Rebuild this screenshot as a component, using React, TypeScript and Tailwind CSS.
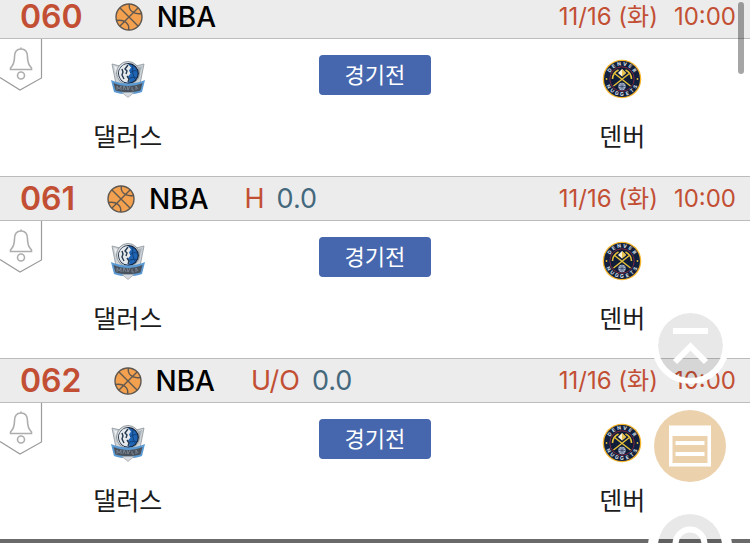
type Match = { no: string; kind?: string; line?: string };

const matches: Match[] = [
  { no: "060" },
  { no: "061", kind: "H", line: "0.0" },
  { no: "062", kind: "U/O", line: "0.0" },
];

function Basketball() {
  return (
    <svg viewBox="0 0 28 28" className="size-7 shrink-0" fill="none" stroke="#5f5750" strokeWidth="1.4" aria-hidden="true">
      <circle cx="14" cy="14" r="13" fill="#f3a14f" />
      <path d="M5 5l18 18M23 5L5 23" />
      <path d="M14.500 1c-1.500 6 4 11 12 9.500M13.500 27c1.500-6-4-11-12-9.500" />
    </svg>
  );
}

function AlarmTag() {
  return (
    <button type="button" aria-label="알림" className="absolute top-0 left-0 h-13 w-11">
      <svg viewBox="0 0 44 52" className="h-13 w-11" fill="none" stroke="#9b9b9b" aria-hidden="true">
        <path d="M41.500 0V39L20 51L0 38.500" strokeWidth="1.200" />
        <path d="M21 8.500v1.500M21 10c-4.500 0-6.500 3.500-6.500 8c0 5-.5 7.500-4 11v1.500h21V29c-3.500-3.500-4-6-4-11c0-4.500-2-8-6.500-8z" strokeWidth="1.600" stroke="#adadad" />
        <circle cx="21" cy="36.500" r="3.500" strokeWidth="1.600" stroke="#adadad" />
      </svg>
    </button>
  );
}

function MavericksLogo() {
  return (
    <svg viewBox="-2 -2 40 40" className="size-10" aria-hidden="true">
      <path d="M2 3l8 2h16l8-2-4 20-12 13L6 23z" fill="#cdd2d6" stroke="#8d969d" strokeWidth=".8" />
      <path d="M4 5l5 2-1 12z" fill="#eef0f2" />
      <path d="M32 5l-5 2 1 12z" fill="#aab2b9" />
      <circle cx="18" cy="12" r="11.500" fill="#d9dde0" stroke="#7d868d" strokeWidth=".8" />
      <circle cx="18.500" cy="12.500" r="9.800" fill="#1f65b4" stroke="#15233a" strokeWidth="1.200" />
      <path d="M18 3c-6 0-9.500 5-9 10s4 8.500 9 8.500c2.500-1 1-4 0-6l2.500-3-1.500-3 2-3z" fill="#e6eaed" />
      <path d="M18 4l-3 4 2 2-1 3M17 15l2 3-1 3M12 8l1 3-1 3 2 4" fill="none" stroke="#25394f" strokeWidth="1.400" />
      <path d="M20 12c3-3 6-3 8-1M23 4c-1 6 0 11 2 14M20 17c3-1 5-1 7 0" fill="none" stroke="#103c75" strokeWidth=".9" />
      <path d="M1 19c10 4.500 24 4.500 34 0l-3 12c-8 3-20 3-28 0z" fill="#5b9ad2" />
      <path d="M3.500 22c9 4 20 4 29 0l-2 7.500c-8 2-17 2-25 0z" fill="#4a535d" />
      <path d="M7 29v-4l2 3 2-3v4M13 29l1-4 2 4M17 25l1 4 2-4M22 26v3h2M26 29v-4l2 3" fill="none" stroke="#8591a0" strokeWidth=".8" />
      <path d="M12 31.500h12l-6 5z" fill="#d7dbdf" stroke="#9ba4aa" strokeWidth=".7" />
    </svg>
  );
}

const topLetters = [..."DENVER"];
const bottomLetters = [..."NUGGETS"];

function NuggetsLogo() {
  return (
    <svg viewBox="0 0 40 40" className="size-10" aria-hidden="true">
      <circle cx="20" cy="20" r="19.300" fill="#f5b62e" />
      <circle cx="20" cy="20" r="18" fill="#12203f" />
      <circle cx="20" cy="20" r="12.200" fill="#101d39" stroke="#7b2943" strokeWidth="1" />
      <g stroke="#e4bf39" fill="none">
        <path d="M11.500 27L28 14M28.500 27L12 14" strokeWidth="1.500" />
        <path d="M10.500 20c0-4 2-7 6-9M29.500 20c0-4-2-7-6-9" strokeWidth="1.600" />
      </g>
      <path d="M20 10l4 4-4 3.500-4-3.500z" fill="#f7f2dc" />
      <path d="M20 10l4 4-4 3.500z" fill="#e9c34c" />
      <circle cx="20" cy="27.500" r="3.700" fill="#aebbd1" />
      <path d="M16.500 27.500h7M20 24v7M17.500 25l5 5M22.500 25l-5 5" stroke="#35476b" strokeWidth=".7" />
      <g className="font-['Inter',sans-serif] text-[5px] font-bold" fill="#dde1ea" textAnchor="middle">
        {topLetters.map((c, i) => (
          <text key={i} x="20" y="6.500" transform={`rotate(${-55 + i * 22} 20 20)`}>{c}</text>
        ))}
        {bottomLetters.map((c, i) => (
          <text key={i} x="20" y="37" transform={`rotate(${60 - i * 20} 20 20)`}>{c}</text>
        ))}
      </g>
      <circle cx="4.500" cy="20" r=".9" fill="#e4bf39" />
      <circle cx="35.500" cy="20" r=".9" fill="#e4bf39" />
    </svg>
  );
}

function MatchRow({ match }: { match: Match }) {
  return (
    <article className="h-[182px]">
      <header className="flex h-[45px] items-center border-y border-[#bcbcbc] bg-[#ececec] pr-3.5 pl-5">
        <h2 className="text-[32px] leading-8 font-semibold text-[#c24f34]">{match.no}</h2>
        <div className="ml-8 flex items-center gap-3.5">
          <Basketball />
          <span className="text-[28px] leading-8 font-medium text-black">NBA</span>
        </div>
        {match.kind && (
          <div className="ml-9 flex items-center gap-3 text-[27px] leading-8">
            <span className="text-[#c24f34]">{match.kind}</span>
            <span className="text-[#44687c]">{match.line}</span>
          </div>
        )}
        <time className="ml-auto flex gap-4 text-[24px] leading-8 text-[#c24f34]">
          <span>11/16 (화)</span>
          <span>10:00</span>
        </time>
      </header>
      <div className="relative grid grid-cols-3 px-1">
        <AlarmTag />
        <div className="flex flex-col items-center gap-4.5 pt-5 text-[25px] leading-10 text-[#1c1c1c]">
          <MavericksLogo />
          <span>댈러스</span>
        </div>
        <div className="flex items-start justify-center pt-4">
          <button type="button" className="h-10 w-28 rounded bg-[#4667ae] text-[22px] leading-10 text-white">경기전</button>
        </div>
        <div className="flex flex-col items-center gap-4.5 pt-5 text-[25px] leading-10 text-[#1c1c1c]">
          <NuggetsLogo />
          <span>덴버</span>
        </div>
      </div>
    </article>
  );
}

export default function App() {
  return (
    <main className="relative h-screen overflow-hidden bg-white font-['Inter','Noto_Sans_CJK_KR',sans-serif]">
      <div className="-mt-1.5">
        {matches.map((m) => (
          <MatchRow key={m.no} match={m} />
        ))}
        <div className="-mt-px h-5 bg-[#6a6a6a]" />
      </div>
      <div className="absolute top-0.5 right-1.5 h-18 w-1.5 rounded-full bg-black/35" />
      <nav className="absolute top-[307px] right-[18px] flex w-[84px] flex-col items-center">
        <button type="button" aria-label="맨 위로" className="size-[77px] rounded-full border-[6px] border-white bg-black/9 bg-clip-padding">
          <svg viewBox="0 0 65 65" className="size-full" fill="none" stroke="#fff" strokeWidth="6" aria-hidden="true">
            <path d="M15 18h35M17 49l15.500-15.500L48 49" />
          </svg>
        </button>
        <button type="button" aria-label="목록" className="mt-[26px] size-[72px] rounded-full bg-[#ecd1ad]">
          <svg viewBox="0 0 72 72" className="size-full" fill="none" stroke="#fff" aria-hidden="true">
            <path d="M15 15.500h42v41H15z" fill="#fff" stroke="none" />
            <path d="M18.500 26h35v27h-35z" fill="#ecd1ad" stroke="none" />
            <path d="M21.500 33h29M21.500 44h29" strokeWidth="4" />
          </svg>
        </button>
        <button type="button" aria-label="새로고침" className="mt-[22px] size-[84px] rounded-full border-[10px] border-white bg-black/9 bg-clip-padding">
          <svg viewBox="0 0 64 64" className="size-full" fill="none" stroke="#fff" strokeWidth="6" aria-hidden="true">
            <circle cx="32" cy="30" r="14.500" />
          </svg>
        </button>
      </nav>
    </main>
  );
}
